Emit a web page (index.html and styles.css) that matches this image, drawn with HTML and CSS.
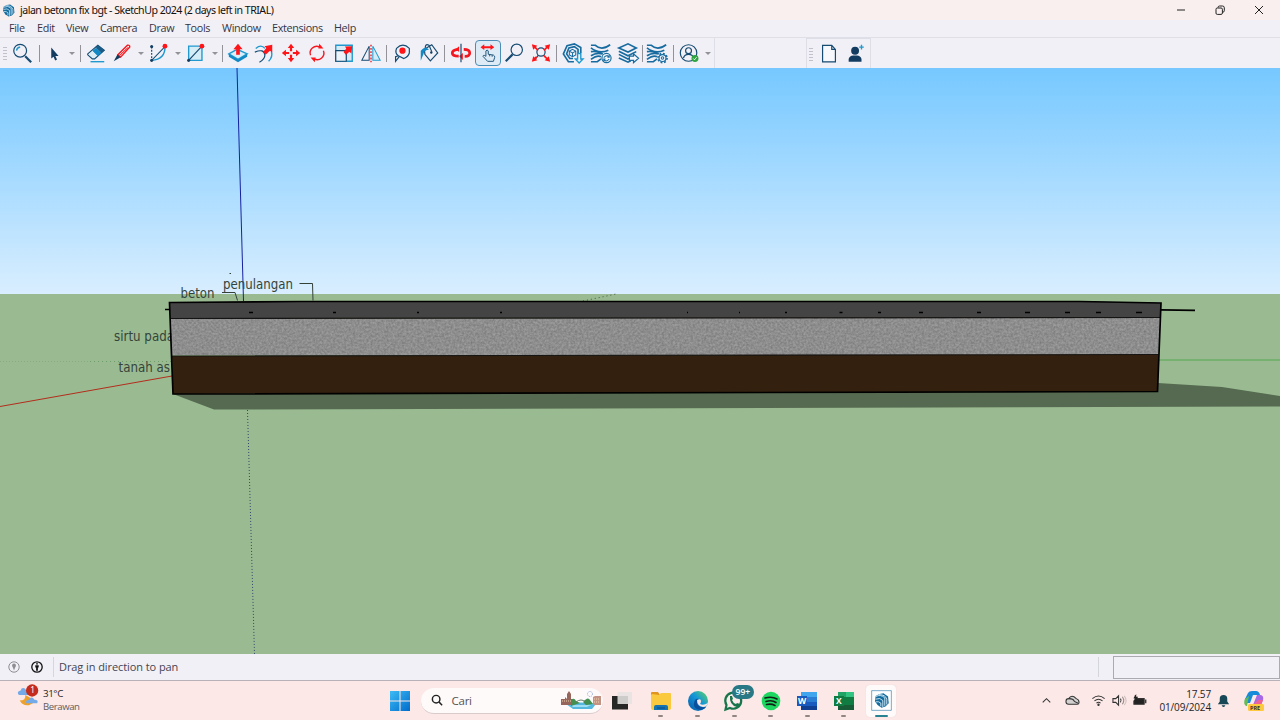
FILE: index.html
```html
<!DOCTYPE html>
<html lang="id">
<head>
<meta charset="utf-8">
<title>jalan betonn fix bgt - SketchUp 2024</title>
<link rel="stylesheet" href="styles.css">
</head>
<body>
<header class="titlebar">
  <svg class="applogo" viewBox="0 0 24 24"><use href="#su"/></svg>
  <span class="title">jalan betonn fix bgt - SketchUp 2024 (2 days left in TRIAL)</span>
  <div class="winbtns">
    <svg viewBox="0 0 12 12"><path d="M2 6h8"/></svg>
    <svg viewBox="0 0 12 12"><rect x="2" y="4" width="6.4" height="6.4" rx="1.3"/><path d="M4 3.6Q4 2 5.6 2H8.500Q10.300 2 10.300 3.800V6.700Q10.300 8 8.800 8.300"/></svg>
    <svg viewBox="0 0 12 12"><path d="M2 2l8 8M10 2l-8 8"/></svg>
  </div>
</header>
<nav class="menu">
  <span>File</span><span>Edit</span><span>View</span><span>Camera</span><span>Draw</span><span>Tools</span><span>Window</span><span>Extensions</span><span>Help</span>
</nav>
<div class="toolbar">
  <div class="tools">
    <i class="grip"></i>
    <svg class="ic" viewBox="0 0 24 24"><circle cx="10" cy="9.500" r="7" class="n" /><path class="b" d="M6 9.500Q6.500 6 10 5.500"/><path class="n thick" d="M15.500 15.500l6.500 6.500"/></svg>
    <i class="sep"></i>
    <svg class="ic" viewBox="0 0 24 24"><path class="nf" d="M9 6v12l2.500-2 1.800 4.200 2-1-1.800-4H17z"/></svg>
    <i class="caret"></i>
    <i class="sep"></i>
    <svg class="ic" viewBox="0 0 24 24"><path class="n" fill="#fff" d="M3 13L14 3.500 21 9l-10.500 9.500H8L3 14z"/><path class="bf" d="M7.500 9.800L14 16 11 19H8l-4-5z" fill-opacity=".15"/><path class="bf" d="M8 9.500l4-3.200 6 5.500-4 3.700z"/><path fill="#175b88" d="M14 3.500L21 9l-3.200 2.800-6-5.500z"/><path class="b" d="M6 21.500h15"/></svg>
    <svg class="ic" viewBox="0 0 24 24"><path class="r" fill="#fff" d="M7.500 14L18 3.500q2.500-.5 2.500 2L10.500 16.500z"/><path class="r thin" d="M9.500 14.500L18.500 6"/><path class="nf" d="M3 21l4-7.500L10.500 16.500z"/></svg>
    <i class="caret"></i>
    <svg class="ic" viewBox="0 0 24 24"><path class="n dash" d="M4 5v15"/><path class="b" d="M4 20Q19 19 18.500 5"/><path class="n thin" d="M4 20L18 5.500"/><circle class="nf" cx="4" cy="5" r="1.700"/><circle class="nf" cx="4" cy="20" r="1.700"/><circle class="rf" cx="18.500" cy="4.500" r="2.600"/></svg>
    <i class="caret"></i>
    <svg class="ic" viewBox="0 0 24 24"><path class="b pale" d="M4 4.500h14.500v15.500H4z"/><path class="n" d="M4 20L18 5"/><circle class="nf" cx="4" cy="20" r="1.700"/><circle class="rf" cx="18.500" cy="4.500" r="2.600"/></svg>
    <i class="caret"></i>
    <i class="sep"></i>
    <svg class="ic" viewBox="0 0 24 24"><path class="b" fill="#d8effb" d="M2 13l9-5 11 5-10 6z"/><path class="bf" d="M2 13v3l10 6 10-6v-3l-10 6z"/><path class="rf" d="M10 14V8H7l5-6L17 8h-3v6z"/></svg>
    <svg class="ic" viewBox="0 0 24 24"><path class="b" d="M3 7q6-5 10 0M20 10q2 6-3 11"/><path class="n" d="M2 11q10-4 11 3 0 5-6 8"/><path class="rf" d="M11 11l3.500-4.500L12.500 4.500 21 3v8.500l-2.500-2-4.500 4z"/></svg>
    <svg class="ic" viewBox="0 0 24 24"><path class="rf" d="M12 2l3.500 4.500h-2.300v3.500h-2.400V6.500H8.500zM12 22l3.500-4.500h-2.300V14h-2.400v3.500H8.500zM2 12l4.500-3.500v2.300H10v2.400H6.500v2.300zM22 12l-4.500-3.500v2.300H14v2.400h3.500v2.300z"/></svg>
    <svg class="ic" viewBox="0 0 24 24"><path class="r" d="M5 14.500a7.200 7.200 0 0 1 10-9M19 9.500a7.200 7.200 0 0 1-10 9"/><path class="rf" d="M14.500 2l4.500 5h-5.500zM9.500 22l-4.500-5h5.500z"/></svg>
    <svg class="ic" viewBox="0 0 24 24"><path class="b" stroke-width="2" fill="#d9eaf5" d="M3 3.500h18v17.500H3z"/><path class="n" fill="#edf3f9" d="M3 9.500h11.500V21H3z"/><path class="rf" d="M11.500 11l3-4-1.500-2 8-.5-1 8-2-2-4 3.500z"/></svg>
    <svg class="ic" viewBox="0 0 24 24"><path class="n thin" d="M10 4.500v15.500H2z"/><path class="b thin pale" d="M14 4.500v15.500h8z"/><path class="r dash" d="M12 3v19"/></svg>
    <i class="sep"></i>
    <svg class="ic" viewBox="0 0 24 24"><path class="n" d="M6 7q7-7 14 0v5q-1 4-6 6l-6-3q-4-3-2-8z"/><path class="n" d="M9 16l-4 5V16l3-1"/><circle class="rf" cx="12.500" cy="9.500" r="3.400"/></svg>
    <svg class="ic" viewBox="0 0 24 24"><path class="n" d="M7 8l8-5 6.500 9-8 8.500-6-7zM8 9q-1-8 4-5.500l3 7"/><path class="bf" d="M3 20.500V9.500q5-6 9-1-5 0-6 4.500z"/><circle class="nf" cx="14.500" cy="11.500" r="1.300"/></svg>
    <i class="sep"></i>
    <svg class="ic" viewBox="0 0 24 24"><path class="r fat" d="M9.500 15.500q-7 0-7-3.500t7-4M15 8q6.500 0 6.500 4t-5.500 3.500"/><path class="rf" d="M10 4.500v6.500L6 8zM14 12v7.500l-4-4z"/><path class="n" d="M12 2v20"/></svg>
    <span class="active"><svg class="ic" viewBox="0 0 24 24"><path class="rf" d="M3 5L7.500 1.500v2.300h7.500V1.500L19.500 5 15 8.500V6.200H7.500v2.300z"/><path class="n thin" d="M9.500 16V9.500q1.400-2 2.800 0v4l6.200 1q2 1 1.500 3L18.500 22h-7l-5.500-6q.5-2.500 3.500 0zM14 14v2M17 14.500v2"/></svg></span>
    <svg class="ic" viewBox="0 0 24 24"><circle class="n" cx="15" cy="8.500" r="6.200"/><path class="n thick" d="M10.500 13.500L3 21"/></svg>
    <svg class="ic" viewBox="0 0 24 24"><circle class="n" cx="12" cy="11" r="4.500"/><path class="n" d="M9 14.500l-3.500 4.500"/><path class="rf" d="M2 2.500l6 1.500-1.500 1.500 3 3-1.300 1.300-3-3L3.500 8.500zM22 2.500l-6 1.500 1.500 1.500-3 3 1.300 1.300 3-3 1.700 1.700zM2 21.500l6-1.500-1.500-1.500 1.500-1.500-1.500-1.500L5 17l-1.500-1.500zM22 21.500l-6-1.500 1.500-1.500-3-3 1.300-1.300 3 3 1.700-1.700z"/></svg>
    <i class="sep"></i>
    <svg class="ic" viewBox="0 0 24 24"><path class="d" d="M13 21.500H7L1.500 13 5.500 4l8-2 7 4v6M12 18H8.500L5 13l2.500-6.500 6-1.500 4 3v5"/><path class="d thin" d="M11.500 8l3.500 2v4l-3.500 2L8 14v-4zM8 10l3.500 2 3.500-2M11.500 12v4"/><path class="b" fill="#eff4fa" d="M17 12.500h3.500v6h2.500l-4.300 4.500-4.200-4.500H17z"/></svg>
    <svg class="ic" viewBox="0 0 24 24"><path class="d" d="M1 3.500h4.500q7 6.500 16.500-.5M1 6.500q9 7 19 2.500M1 10.500q7-1 10 2M1 15q6-4 13-2M1 19q7-5 11-3M1 21.500h7l4-3"/><circle class="d white" cx="18" cy="17.500" r="5"/><path class="d thin" d="M15 17q3.500-4 6-.5M21 18.500q-3.500 4-6 .5M21 14v2.500h-2M15 21v-2.500h2"/></svg>
    <svg class="ic" viewBox="0 0 24 24"><path class="d" d="M2 6.500l10-4.500 9 4.500-9 4.500zM2 10l10 5 9-4.500M2 13.500l10 5 3-1.500M2 17.500l10 4.500 3-1.500"/><path class="d white" d="M13.500 15.500h4.500V13l5.500 4.800-5.500 4.700V20h-4.500z"/></svg>
    <i class="sep"></i>
    <svg class="ic" viewBox="0 0 24 24"><path class="d" d="M1 3.500h4.500q7 6.500 16.500-.5M1 6.500q9 7 19 2.500M1 10.500q7-1 10 2M1 15q6-4 13-2M1 19q7-5 11-3M1 21.500h7l4-3"/><circle class="d white" cx="18" cy="17.500" r="3.800"/><circle class="d gear" cx="18" cy="17.500" r="5"/><circle class="d thin" cx="18" cy="17.500" r="1.400"/></svg>
    <i class="sep"></i>
    <svg class="ic" viewBox="0 0 24 24"><circle class="n" cx="11.500" cy="12" r="9"/><circle class="n" cx="11.500" cy="9.500" r="3.200"/><path class="n" d="M6 17.500q1-4 5.500-4t5.500 4"/><circle cx="18.500" cy="18" r="3.800" fill="#2fa542"/><path d="M16.700 18l1.300 1.400 2.300-2.800" stroke="#fff" fill="none"/></svg>
    <i class="caret"></i>
  </div>
  <div class="tools2">
    <i class="grip"></i>
    <svg class="ic" viewBox="0 0 24 24"><path class="n white" d="M5 2.500h10l4 4.500v13.500H5zM15 3v4h4"/></svg>
    <svg class="ic" viewBox="0 0 24 24"><circle class="nf" cx="11" cy="8.500" r="4.300"/><path class="nf" d="M4 20.500V17.500q1-4 5-4h4q4 0 5 4v3z"/><path class="b" d="M18 2v5M15.500 4.500h5"/></svg>
  </div>
</div>
<main class="view">
  <svg class="scene" viewBox="0 68 1280 586">
    <defs>
      <linearGradient id="sky" x1="0" y1="0" x2="0" y2="1"><stop offset="0" stop-color="#76c8ff"/><stop offset="1" stop-color="#d9eeff"/></linearGradient>
      <filter id="grain" x="0" y="0" width="1" height="1" color-interpolation-filters="sRGB"><feTurbulence type="fractalNoise" baseFrequency=".45" numOctaves="2" seed="5"/><feColorMatrix values=".2 0 0 0 .455 .2 0 0 0 .455 .2 0 0 0 .455 0 0 0 0 1"/><feComposite in2="SourceGraphic" operator="in"/></filter>
    </defs>
    <rect y="68" width="1280" height="226" fill="url(#sky)"/>
    <rect y="294" width="1280" height="360" fill="#9abb91"/>
    <path d="M237 68L243.500 301" stroke="#1522a0"/>
    <path d="M247.500 410L254.500 654" stroke="#32446a" stroke-dasharray="1 2"/>
    <path d="M0 406.500L172 376" stroke="#b32c1c"/>
    <path d="M0 361.500H88" stroke="#86ad7f" stroke-dasharray="1 2"/>
    <path d="M90 361.500H172" stroke="#6f9d69" stroke-dasharray="1 3"/>
    <path d="M1158 360H1280" stroke="#52a750"/>
    <path d="M583 301L616 294" stroke="#435941" stroke-dasharray="1 3"/>
    <path d="M173 394L214 409.500 1280 406.500V396L1222 387 1158 383V392z" fill="#556a50"/>
    <g class="label"><text x="180.500" y="297.500" textLength="34" lengthAdjust="spacingAndGlyphs">beton</text><text x="223" y="289" textLength="70" lengthAdjust="spacingAndGlyphs">penulangan</text><text x="114" y="341" textLength="60" lengthAdjust="spacingAndGlyphs">sirtu pada</text><text x="118.500" y="372" textLength="51.500" lengthAdjust="spacingAndGlyphs">tanah as</text></g>
    <path d="M222 292.500h13l2.500 8M299.500 283.500h13l.5 17M229.500 273.500h1.500" fill="none" stroke="#334139"/>
    <path d="M169.500 303L300 301 700 301.500 1090 301.500 1161 303 1160 318H170.500z" fill="#444"/>
    <path d="M171 318.500L1160 317.500 1158.500 355H172z" fill="#8d8d8d" filter="url(#grain)"/>
    <path d="M172 356L1158.500 354.500 1158 391.500 173 394z" fill="#33200f"/>
    <path d="M171 318.500L1160 317.500M172 356L1158.500 354.500" stroke="#171513" stroke-width="1.100"/>
    <path d="M169.500 302.500L300 301.500 1080 301.500 1161 303 1157.500 391.500 173 394z" fill="none" stroke="#000" stroke-width="1.700"/>
    <path d="M165 309.500h5M1161 309.800L1195 310.300" stroke="#000" stroke-width="1.700"/>
    <path d="M249 312.500h4M333 312.500h3M417 312.500h2M500 312.500h2M687 312.500h1M739 312.500h1M785 312.500h2M839.500 312.500h3M878 312.500h3M919 312.500h4M977 312.500h4M1025 312.500h5M1065 312.500h5M1096 312.500h5M1136 312.500h6" stroke="#000" stroke-width="1.600"/>
  </svg>
</main>
<div class="status">
  <svg class="stic pale-icon" viewBox="0 0 12 12"><circle cx="6" cy="6" r="5.200" fill="none" stroke="currentColor"/><circle cx="6" cy="4.500" r="1.900" fill="currentColor"/><path d="M4.500 5.500L6 9.500l1.500-4z" fill="currentColor"/></svg>
  <svg class="stic" viewBox="0 0 12 12"><circle cx="6" cy="6" r="5.200" fill="none" stroke="currentColor" stroke-width="1.300"/><circle cx="6" cy="2.800" r=".9" fill="currentColor"/><path d="M4.300 4.200h3.400v2.300h-.8V9.800H5.100V6.500h-.8z" fill="currentColor"/></svg>
  <span class="hint">Drag in direction to pan</span>
  <i class="stsep"></i><span class="measure"></span>
</div>
<footer class="taskbar">
  <div class="weather">
    <svg viewBox="0 0 24 24"><path fill="#eea02c" d="M9 11q1 6-6 6 3 6 10 5 6-2 7-5z"/><path fill="#75aae9" d="M2 11q-3-4 2-5 1-4 5-2l4 7zM10 20q-1-4 3-4 3-5 6 0 5 0 3 4z"/><circle cx="16.500" cy="6" r="6.700" fill="#c42b1c"/><text x="14.500" y="9">1</text></svg>
    <div class="wx"><span>31°C</span><span class="muted">Berawan</span></div>
  </div>
  <div class="apps">
    <span class="app"><svg viewBox="0 0 20 20"><defs><linearGradient id="win" x2="1" y2="1"><stop stop-color="#3dbcf5"/><stop offset="1" stop-color="#006bcb"/></linearGradient></defs><path fill="url(#win)" d="M0 0h9.500v9.500H0zM10.500 0H20v9.500h-9.500zM0 10.500h9.500V20H0zM10.500 10.500H20V20h-9.500z"/></svg></span>
    <div class="search"><svg class="mag" viewBox="0 0 14 14"><circle cx="6" cy="6" r="4.400"/><path d="M9.200 9.200L13 13"/></svg><span>Cari</span>
      <svg class="city" viewBox="0 0 40 20"><path fill="#55b9df" d="M5 14q15-3 30 0l-4 5H12z"/><path fill="#a0ddf2" d="M10 15h20l-4 2H12z"/><path fill="#96655c" d="M0 9h4V7l2 2V4l2-3 2 3v5h2v6H0z"/><path fill="#c29385" d="M32 7l2-1h6v9h-8z"/><path d="M1 11h10M33 9h6M33 12h6" stroke="#f0d4b0" stroke-dasharray="1 1"/><path fill="#438f50" d="M10 10q3-3 5 1l4 2-9 3zM22 12q5-6 7-2l3 4-7 1z"/><path d="M15 12q5-4 10 0" fill="none" stroke="#5f7e66"/><circle cx="29" cy="4" r="2.500" fill="none" stroke="#8ea9d8" stroke-dasharray="1 1"/></svg></div>
    <span class="app taskview"><svg viewBox="0 0 20 20"><path d="M0 5h16v13.500H0z" fill="#262626"/><path d="M5.500 1H20v12H5.500z" fill="#e6e3e2" opacity=".88"/></svg></span>
    <span class="app run"><svg viewBox="0 0 20 20"><path fill="#df9520" d="M0 2q0-1 1-1h6l2 3H0z"/><path fill="#fbc93d" d="M0 4l1-1 7 1 2-2h9q1 0 1 1v14q0 2-2 2H2q-2 0-2-2z"/><path fill="#1573b4" d="M3 19v-3q0-2 2-2h10q2 0 2 2v3z"/><path d="M6 17h8" stroke="#0b4a80"/></svg></span>
    <span class="app run"><svg viewBox="0 0 20 20"><defs><linearGradient id="edge" x1="0" y1="1" x2="1" y2="0"><stop stop-color="#0755a6"/><stop offset=".55" stop-color="#1598d7"/><stop offset="1" stop-color="#65d65b"/></linearGradient></defs><circle cx="10" cy="10" r="10" fill="url(#edge)"/><path fill="#0b4f9c" d="M7 9q-4 9 6 10 4-1 5-3-8 1-9-4 0-3 2-4Q9 7 7 9z"/><path fill="#f9e7e6" d="M9 9q4-2 4 1 0 2-1 3 3 2 8-1-1 4-5 4-6-1-6-7z"/></svg></span>
    <span class="app run"><svg viewBox="0 0 20 20"><path d="M1.500 18.500l1-4.500a8 8 0 1 1 3.500 3z" fill="#fcebea" stroke="#18754b" stroke-width="2.200"/><path d="M6 5l2 0 1 3-1 1q1 3 4 4l1-1 3 1q0 3-3 3Q5 14 6 5z" fill="#18754b"/></svg><b class="badge">99+</b></span>
    <span class="app run"><svg viewBox="0 0 20 20"><circle cx="10" cy="10" r="9.300" fill="#1ed760"/><path d="M4 7q7-2 12 1M5 10.500q6-2 10 1M5.500 13.500q5-1 8.500 1" fill="none" stroke="#122117" stroke-width="1.600" stroke-linecap="round"/></svg></span>
    <span class="app run"><svg viewBox="0 0 20 20"><path fill="#41a5ee" d="M4 1h16v5H4z"/><path fill="#2b7cd3" d="M4 6h16v5H4z"/><path fill="#185abd" d="M4 11h16v4H4z"/><path fill="#103f91" d="M4 15h16v4H4z"/><path fill="#185abd" d="M0 5h10v10H0z"/><text x="1" y="13">W</text></svg></span>
    <span class="app run"><svg viewBox="0 0 20 20"><path fill="#21a366" d="M4 1h16v5H4z"/><path fill="#33c481" d="M12 1h8v5h-8z"/><path fill="#107c41" d="M4 6h16v8H4z"/><path fill="#185c37" d="M4 14h16v5H4z"/><path fill="#107c41" d="M0 5h10v10H0z"/><text x="2" y="13">X</text></svg></span>
    <span class="app run current"><svg viewBox="-4 -4 32 32"><path d="M-3-3h30v30H-3z" fill="#fff" stroke="#347eac"/><g id="su"><path fill="#146b9d" d="M3 5l6-3 6-1 7 5 1 10-5 5-6 2-6-4-4-6z"/><path d="M3 6q8-4 14 2v12M3 10q7-3 11 2v10M3 14q5-1 8 2v5M8 3q10 0 12 7v8" fill="none" stroke="#d8ecf7" stroke-width="1.400"/></g></svg></span>
  </div>
  <div class="tray">
    <svg viewBox="0 0 16 16"><path d="M4 10l4-4 4 4"/></svg>
    <svg viewBox="0 0 16 16"><path fill="#d3d1d0" d="M1 9q0-3 3-3 3-5 8 0 3 1 3 4 0 2-2 2H4q-3 0-3-3z"/><path d="M4 6q5 0 6 3l4 2"/></svg>
    <svg viewBox="0 0 16 16"><path d="M1.500 6q6.500-5.500 13 0M3.700 8.500q4.300-3.600 8.600 0M5.800 10.700q2.200-1.800 4.400 0"/><circle cx="8" cy="12.500" r=".7"/></svg>
    <svg viewBox="0 0 16 16"><path d="M1 6h3l3-3v10l-3-3H1zM9 6q1.500 2 0 4"/><path opacity=".5" d="M11 4q3 4 0 8"/><path opacity=".2" d="M13 3q4 5 0 10"/></svg>
    <svg viewBox="0 0 16 16"><path fill="#222" d="M3 6h10v6H2V8M14 7.500h.8v3H14M3.500 2v5"/><path fill="#222" stroke="none" d="M1.500 5.500L4.500 1v3h2L4 8.500V6z"/></svg>
    <div class="clock"><span>17.57</span><span>01/09/2024</span></div>
    <svg class="bell" viewBox="0 0 16 16"><path fill="#174856" stroke="none" d="M2 12l2-3V6q0-4 4-4t4 4v3l2 3zM6 13h4q-1 2-2 2t-2-2z"/></svg>
    <svg class="copilot" viewBox="0 0 20 20"><path fill="#168bd9" d="M4 2q1-2 4-2h4q3 0 4 4H9l-3 8H3Q0 12 1 8z"/><path fill="#66bb52" d="M1 8l4-3-2 10H2Q-1 13 1 8z"/><path fill="#a86ae4" d="M13 4h4q3 1 2 5l-2 5H9z"/><path fill="#ee6295" d="M14 9h5l-2 5H9z"/><rect x="4" y="13" width="16" height="7" rx="1.500" fill="#ffc83d"/><text x="6" y="18.800">PRE</text></svg>
  </div>
</footer>
</body>
</html>
```
FILE: styles.css
```css
*{box-sizing:border-box}
body{margin:0;width:1280px;height:720px;overflow:hidden;display:flex;flex-direction:column;font-family:"Open Sans","Noto Sans",sans-serif;font-size:11px;color:#242424;background:#f1f0f7}
svg{display:block;flex:none;overflow:visible}
.titlebar{height:20px;flex:none;display:flex;align-items:center;background:#f9efee;padding-left:2px}
.applogo{width:13px;height:13px;margin-right:5px}
.title{font-family:"Noto Sans",sans-serif;font-size:10.6px;letter-spacing:-.5px;color:#111;white-space:nowrap}
.winbtns{margin-left:auto;display:flex;gap:27px;padding-right:15px}
.winbtns svg{width:12px;height:12px;fill:none;stroke:#222;stroke-width:1}
.menu{height:18px;flex:none;display:grid;grid-template-columns:28px 29px 34px 49px 36px 37px 50px 62px 40px;padding:0 0 1px 9px;align-items:center;line-height:16px;color:#343442;border-bottom:1px solid #dedfe7;font-size:10.8px;letter-spacing:-.34px;white-space:nowrap}
.toolbar{height:30px;flex:none;display:flex;justify-content:flex-start}
.tools{width:715px;border-right:1px solid #dddee6;display:grid;grid-template-columns:9px 26px 8px 22px 14px 3px 27px 26px 11px 26px 11px 26px 11px 4px 27px 26px 27px 26px 27px 27px 5px 26px 27px 5px 27px 27px 26px 27px 5px 28px 27px 27px 2px 28px 5px 26px 11px;align-items:center;justify-items:center}
.tools2{width:65px;margin-left:91px;border:1px solid #dddee6;border-bottom:0;display:grid;grid-template-columns:8px 27px 27px;align-items:center;justify-items:center}
.ic{width:22px;height:22px;fill:none}
.grip{width:4px;height:14px;background:radial-gradient(circle,#c0c1ca .7px,transparent 1px) 0 0/2px 3px}
.sep{width:1px;height:17px;background:#929298}
.caret{border:3px solid transparent;border-top:3px solid #929299;border-bottom:0}
.active{width:26px;height:26px;border:1px solid #4c8db5;border-radius:4px;background:#dcebf5;display:grid;place-items:center}
.active .ic{width:20px;height:20px}
.n{stroke:#164b72;stroke-width:1.3}.b{stroke:#2199ce;stroke-width:1.5}.d{stroke:#176b9f;stroke-width:1.8}.r{stroke:#f31820;stroke-width:1.5}
.nf{fill:#123d60}.bf{fill:#1289c4}.rf{fill:#ff1418}.pale{fill:#d5edf7}.white{fill:#f7f8fc;stroke-width:1.3}
.thick{stroke-width:2.4}.thin{stroke-width:1.1}.fat{stroke-width:3}.dash{stroke-dasharray:2 1.5}.gear{stroke-dasharray:2 1.9}
.view{height:586px;flex:none}
.scene{width:1280px;height:586px}
.label{font-family:"DejaVu Sans Condensed","DejaVu Sans",sans-serif;font-size:13.6px;fill:#35443b}
.label text{font-stretch:condensed}
.status{height:27px;flex:none;display:flex;align-items:center;border-bottom:1px solid #b8b2b8;padding-left:8px;background:#f1f0f7}
.stic{width:12px;height:12px;margin-right:11px;color:#111}
.pale-icon{color:#8d8d92}
.hint{border-left:1px solid #d6d6dd;margin-left:-1px;padding-left:5px;line-height:20px;letter-spacing:-.08px;color:#454550}
.stsep{height:20px;width:1px;background:#d5d5dc;margin-left:auto}
.measure{width:167px;height:23px;margin-left:14px;border:1px solid #aaaab3}
.taskbar{height:39px;flex:none;display:grid;grid-template-columns:382px 518px 1fr;background:#fbe8e7}
.weather{display:flex;padding:4px 0 0 16px;gap:3px}
.weather svg{width:24px;height:22px}
.weather text{font:9px "Noto Sans",sans-serif;fill:#fff}
.wx{display:flex;flex-direction:column;font-size:9.8px;line-height:13px;letter-spacing:-.42px;padding-top:2px}
.muted{color:#625d5d;font-size:9.600px}
.apps{display:flex;align-items:center}
.app{width:36.6px;height:34px;display:flex;align-items:center;justify-content:center;position:relative;flex:none}
.app svg{width:20px;height:20px}
.taskview{margin-right:2.500px}
.run::after{content:"";position:absolute;bottom:1px;width:5px;height:2px;border-radius:2px;background:#918684}
.app text{font:bold 8.500px "Open Sans",sans-serif;fill:#fff}
.search{width:182px;height:26px;margin:0 1px 0 2px;background:#fefafa;border-radius:13px;border-bottom:1px solid #dacbcb;display:flex;align-items:center;padding:0 2px 0 10px;font-size:11.5px;letter-spacing:-.3px;color:#575252}
.mag{width:12px;height:12px;margin-right:9px;fill:none;stroke:#222;stroke-width:1.7}
.city{width:40px;height:20px;margin-left:auto}
.badge{position:absolute;left:16px;top:1px;width:22px;height:14px;border-radius:7px;background:#287886;color:#fff;font-size:8.500px;font-weight:600;line-height:14px;text-align:center}
.current{width:30px;margin-left:4px;height:32px;background:#fffafa;border-radius:4px;box-shadow:0 0 1px #dccccc}
.current svg{width:21px;height:21px}
.current::after{width:13px;bottom:0;background:#278391}
.tray{display:grid;grid-template-columns:26px 26px 27px 14px 26px 59px 25px 36px;padding-left:133px;align-items:center;justify-items:center}
.tray svg{width:15px;height:15px;fill:none;stroke:#333;stroke-width:1.1}
.clock{display:flex;flex-direction:column;text-align:right;font-size:10px;line-height:13px;width:56px;justify-self:end;letter-spacing:-.15px;white-space:nowrap}
.tray .copilot{width:20px;height:20px;stroke:none}
.copilot text{font:bold 5.500px "Open Sans",sans-serif;fill:#333}
```
